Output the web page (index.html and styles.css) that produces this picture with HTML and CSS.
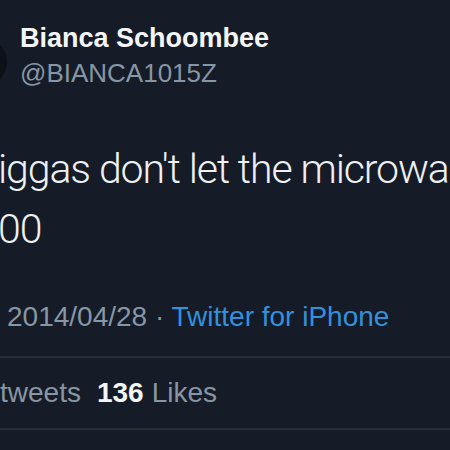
FILE: index.html
```html
<!DOCTYPE html>
<html>
<head>
<meta charset="utf-8">
<link rel="stylesheet" href="styles.css">
</head>
<body>
<div class="tweet">
  <div class="header">
    <div class="avatar"></div>
    <div class="ident">
      <div class="name">Bianca Schoombee</div>
      <div class="handle">@BIANCA1015Z</div>
    </div>
  </div>
  <div class="text">
    <div class="line">iggas don't let the microwa</div>
    <div class="line">00</div>
  </div>
  <div class="meta"><span class="date">2014/04/28</span><span class="dot"> · </span><span class="source">Twitter for iPhone</span></div>
  <div class="sep"></div>
  <div class="stats"><span class="label">tweets</span><span class="num">136</span><span class="label">Likes</span></div>
  <div class="sep"></div>
</div>
</body>
</html>
```

FILE: styles.css
```css
html, body {
  margin: 0;
  padding: 0;
  background: #151c27;
  width: 450px;
  height: 450px;
  overflow: hidden;
}
.tweet {
  font-family: "Liberation Sans", Arial, sans-serif;
  color: #f2f3f5;
  padding-top: 22px;
}
.header {
  display: flex;
  align-items: flex-start;
  gap: 13px;
}
.avatar {
  flex: none;
  width: 50px;
  height: 50px;
  border-radius: 50%;
  background: #0c1118;
  margin-left: -43px;
  margin-top: 15px;
}
.name {
  font-size: 27px;
  font-weight: bold;
  line-height: 32px;
  color: #f4f5f7;
}
.handle {
  font-size: 26px;
  line-height: 32px;
  margin-top: 3px;
  color: #8796a4;
}
.text {
  margin-top: 50px;
  margin-left: -2px;
  font-family: Roboto, "Liberation Sans", sans-serif;
  font-weight: 300;
  font-size: 41px;
  line-height: 60px;
  letter-spacing: -1.1px;
  white-space: nowrap;
  color: #eef0f2;
}
.meta {
  margin-top: 41px;
  padding-left: 7px;
  font-size: 28px;
  line-height: 34px;
  white-space: nowrap;
  color: #8796a4;
}
.source {
  color: #3490dc;
}
.sep {
  height: 2px;
  background: #262e3a;
}
.meta + .sep {
  margin-top: 22px;
}
.stats {
  padding: 18px 0;
  font-size: 28px;
  line-height: 34px;
  white-space: nowrap;
  color: #8796a4;
  display: flex;
  gap: 8px;
}
.num {
  color: #f4f5f7;
  font-weight: bold;
  margin-left: 8px;
}
```
